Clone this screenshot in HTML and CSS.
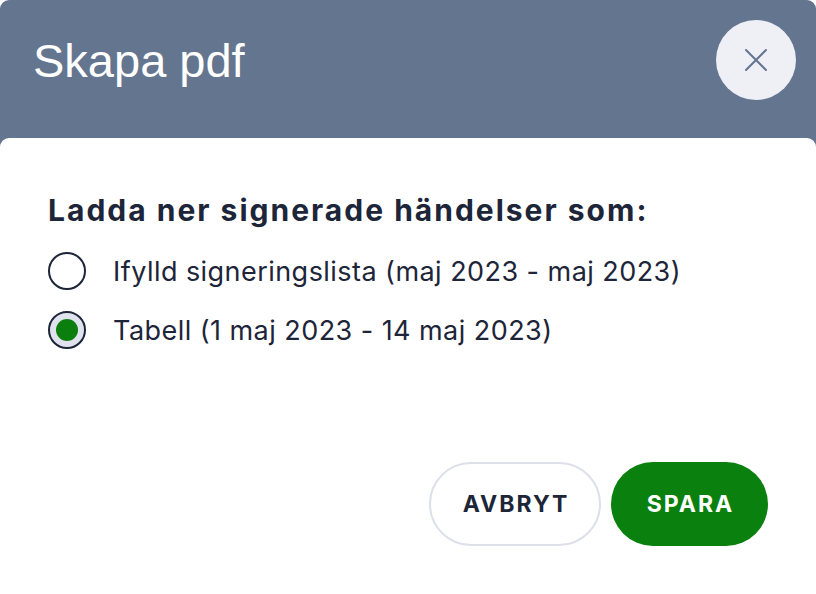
FILE: index.html
```html
<!DOCTYPE html>
<html lang="sv">
<head>
<meta charset="utf-8">
<title>Skapa pdf</title>
<link rel="stylesheet" href="styles.css">
</head>
<body>
<div class="dialog">
  <header class="dialog-header">
    <h1 class="dialog-title">Skapa pdf</h1>
    <button class="close-btn" type="button" aria-label="Stäng">
      <svg width="24" height="24" viewBox="0 0 24 24" fill="none" stroke="currentColor" stroke-width="2" stroke-linecap="round">
        <path d="M2 2 L22 22 M22 2 L2 22"/>
      </svg>
    </button>
  </header>
  <main class="dialog-body">
    <h2 class="question">Ladda ner signerade händelser som:</h2>
    <div class="options">
      <label class="option">
        <span class="radio"></span>
        <span class="option-text">Ifylld signeringslista (maj 2023 - maj 2023)</span>
      </label>
      <label class="option">
        <span class="radio checked"><span class="dot"></span></span>
        <span class="option-text">Tabell (1 maj 2023 - 14 maj 2023)</span>
      </label>
    </div>
    <div class="actions">
      <button class="btn btn-secondary" type="button">AVBRYT</button>
      <button class="btn btn-primary" type="button">SPARA</button>
    </div>
  </main>
</div>
</body>
</html>
```

FILE: styles.css
```css
html, body {
  margin: 0;
  padding: 0;
  background: #ffffff;
}

body {
  width: 816px;
  height: 594px;
  overflow: hidden;
  font-family: Inter, "Liberation Sans", sans-serif;
  color: #1d2539;
}

.dialog {
  width: 816px;
  height: 594px;
  display: flex;
  flex-direction: column;
  background: #64758f;
  border-radius: 9px 9px 0 0;
}

.dialog-header {
  height: 138px;
  box-sizing: border-box;
  padding: 20px 20px 0 33px;
  display: flex;
  align-items: flex-start;
  justify-content: space-between;
}

.dialog-title {
  margin: 0;
  height: 80px;
  display: flex;
  align-items: center;
  font-family: "Liberation Sans", Arial, sans-serif;
  font-weight: 400;
  font-size: 47px;
  color: #ffffff;
}

.close-btn {
  width: 80px;
  height: 80px;
  border: none;
  border-radius: 50%;
  background: #eef0f5;
  color: #64758f;
  display: flex;
  align-items: center;
  justify-content: center;
  padding: 0;
}

.dialog-body {
  flex: 1;
  background: #ffffff;
  border-radius: 9px 9px 0 0;
  padding: 54px 48px 0 48px;
  display: flex;
  flex-direction: column;
}

.question {
  margin: 0;
  font-size: 30px;
  font-weight: 650;
  line-height: 36px;
  letter-spacing: 2px;
  color: #1d2539;
}

.options {
  margin-top: 24px;
  display: flex;
  flex-direction: column;
  gap: 21px;
}

.option {
  display: flex;
  align-items: center;
  gap: 27px;
  height: 38px;
}

.radio {
  width: 38px;
  height: 38px;
  box-sizing: border-box;
  border: 2px solid #1d2539;
  border-radius: 50%;
  background: #ffffff;
  display: flex;
  align-items: center;
  justify-content: center;
  flex-shrink: 0;
}

.radio.checked {
  background: #e0e3ee;
}

.dot {
  width: 22px;
  height: 22px;
  border-radius: 50%;
  background: #0a7f0e;
}

.option-text {
  font-size: 27px;
  font-weight: 400;
  letter-spacing: 0.45px;
  color: #1d2539;
}

.actions {
  margin-top: 113px;
  display: flex;
  justify-content: flex-end;
  gap: 10px;
}

.btn {
  height: 84px;
  border-radius: 42px;
  font-family: Inter, "Liberation Sans", sans-serif;
  font-size: 23px;
  font-weight: 700;
  letter-spacing: 2px;
  padding: 0 0 0 2px;
  box-sizing: border-box;
}

.btn-secondary {
  width: 172px;
  background: #ffffff;
  border: 2px solid #dde0ea;
  color: #1d2539;
}

.btn-primary {
  width: 157px;
  background: #0a800f;
  border: none;
  color: #ffffff;
}
```
